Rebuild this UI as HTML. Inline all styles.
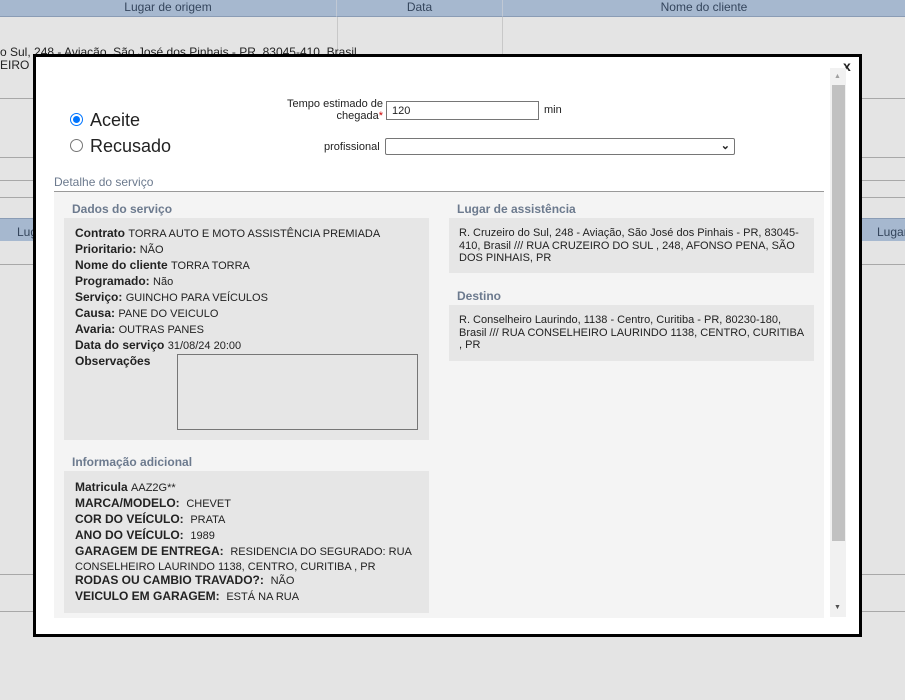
<!DOCTYPE html>
<html><head><meta charset="utf-8"><style>
*{margin:0;padding:0;box-sizing:border-box}
body{width:905px;height:700px;background:#e4e4e4;font-family:"Liberation Sans",Arial,sans-serif;color:#222;position:relative;overflow:hidden}
.a{position:absolute}
.hl{position:absolute;left:0;width:905px;height:1px;background:#a8a8a8}
.th{position:absolute;top:0;height:17px;background:#a6b8cf;border-bottom:1px solid #8a9cb5;font-size:12px;color:#34455c;text-align:center;line-height:15px}
.h{font-size:12px;font-weight:bold;color:#6c7a8e}
.box{background:#e6e6e6}
.l{font-size:12px;white-space:nowrap}
.l div{height:16px;line-height:16px}
.l b{font-weight:bold}
.l span{font-size:11px;line-height:16px}
.addr{font-size:11px;line-height:12.5px;padding:9px 0 0 10px;white-space:nowrap}
</style></head><body>
<div class="th" style="left:0;width:337px;border-right:1px solid #c0c8d4">Lugar de origem</div>
<div class="th" style="left:337px;width:166px;border-right:1px solid #c0c8d4">Data</div>
<div class="th" style="left:503px;width:402px">Nome do cliente</div>
<div class="a" style="left:337px;top:17px;width:1px;height:81px;background:#c8c8c8"></div>
<div class="a" style="left:502px;top:17px;width:1px;height:81px;background:#c8c8c8"></div>
<div class="a" style="left:0;top:46px;font-size:12px;line-height:13px;white-space:nowrap">o Sul, 248 - Aviação, São José dos Pinhais - PR, 83045-410, Brasil<br>EIRO D</div>
<div class="hl" style="top:98px"></div>
<div class="hl" style="top:157px"></div>
<div class="hl" style="top:180px"></div>
<div class="hl" style="top:197px"></div>
<div class="a" style="left:0;top:218px;width:905px;height:23px;background:#a6b8cf;border-top:1px solid #8a9cb5"></div>
<div class="a" style="left:17px;top:225px;font-size:12px;color:#34455c">Lugar</div>
<div class="a" style="left:877px;top:225px;font-size:12px;color:#34455c">Lugar</div>
<div class="hl" style="top:264px"></div>
<div class="hl" style="top:574px"></div>
<div class="hl" style="top:611px"></div>

<div class="a" style="left:33px;top:54px;width:829px;height:583px;background:#fff;border:3px solid #000"></div>
<div class="a" style="left:843px;top:58px;font-size:14px;font-weight:bold">x</div>
<div class="a" style="left:830px;top:68px;width:16px;height:549px;background:#f1f1f1"></div>
<div class="a" style="left:832px;top:85px;width:13px;height:456px;background:#c1c1c1"></div>
<div class="a" style="left:834px;top:73px;font-size:7px;color:#a0a0a0">▲</div>
<div class="a" style="left:834px;top:604px;font-size:7px;color:#505050">▼</div>

<div class="a" style="left:70px;top:113px;width:13px;height:13px;border-radius:50%;border:1px solid #0075ff;background:#fff"><div style="margin:2px;width:7px;height:7px;border-radius:50%;background:#0075ff"></div></div>
<div class="a" style="left:90px;top:110px;font-size:18px">Aceite</div>
<div class="a" style="left:70px;top:139px;width:13px;height:13px;border-radius:50%;border:1px solid #767676;background:#fff"></div>
<div class="a" style="left:90px;top:136px;font-size:18px">Recusado</div>
<div class="a" style="left:260px;top:98px;width:123px;text-align:right;font-size:11px;line-height:12px">Tempo estimado de chegada<span style="color:#c00">*</span></div>
<div class="a" style="left:386px;top:101px;width:153px;height:19px;border:1px solid #767676;font-size:11px;padding:3px 5px">120</div>
<div class="a" style="left:544px;top:104px;font-size:11px">min</div>
<div class="a" style="left:324px;top:141px;font-size:11px">profissional</div>
<div class="a" style="left:385px;top:138px;width:350px;height:17px;border:1px solid #767676;border-radius:2px"><span style="position:absolute;right:4px;top:0;font-size:11px;font-weight:bold">⌄</span></div>

<div class="a h" style="left:54px;top:175px;font-weight:normal;font-size:12px">Detalhe do serviço</div>
<div class="a" style="left:54px;top:191px;width:770px;height:1px;background:#999"></div>
<div class="a" style="left:54px;top:192px;width:770px;height:426px;background:#f4f4f4"></div>

<div class="a h" style="left:72px;top:202px">Dados do serviço</div>
<div class="a box" style="left:64px;top:218px;width:365px;height:222px"></div>
<div class="a l" style="left:75px;top:225px">
<div><b>Contrato</b> <span>TORRA AUTO E MOTO ASSISTÊNCIA PREMIADA</span></div>
<div><b>Prioritario:</b> <span>NÃO</span></div>
<div><b>Nome do cliente</b> <span>TORRA TORRA</span></div>
<div><b>Programado:</b> <span>Não</span></div>
<div><b>Serviço:</b> <span>GUINCHO PARA VEÍCULOS</span></div>
<div><b>Causa:</b> <span>PANE DO VEICULO</span></div>
<div><b>Avaria:</b> <span>OUTRAS PANES</span></div>
<div><b>Data do serviço</b> <span>31/08/24 20:00</span></div>
<div><b>Observações</b></div></div>
<div class="a" style="left:177px;top:354px;width:241px;height:76px;border:1px solid #767676"></div>

<div class="a h" style="left:72px;top:455px">Informação adicional</div>
<div class="a box" style="left:64px;top:471px;width:365px;height:142px"></div>
<div class="a l" style="left:75px;top:479px">
<div><b>Matricula</b> <span>AAZ2G**</span></div>
<div><b>MARCA/MODELO:</b>&nbsp; <span>CHEVET</span></div>
<div><b>COR DO VEÍCULO:</b>&nbsp; <span>PRATA</span></div>
<div><b>ANO DO VEÍCULO:</b>&nbsp; <span>1989</span></div>
<div><b>GARAGEM DE ENTREGA:</b>&nbsp; <span>RESIDENCIA DO SEGURADO: RUA</span></div>
<div style="height:13px;line-height:13px"><span>CONSELHEIRO LAURINDO 1138, CENTRO, CURITIBA , PR</span></div>
<div><b>RODAS OU CAMBIO TRAVADO?:</b>&nbsp; <span>NÃO</span></div>
<div><b>VEICULO EM GARAGEM:</b>&nbsp; <span>ESTÁ NA RUA</span></div></div>

<div class="a h" style="left:457px;top:202px">Lugar de assistência</div>
<div class="a box addr" style="left:449px;top:218px;width:365px;height:55px">R. Cruzeiro do Sul, 248 - Aviação, São José dos Pinhais - PR, 83045-<br>410, Brasil /// RUA CRUZEIRO DO SUL , 248, AFONSO PENA, SÃO<br>DOS PINHAIS, PR</div>
<div class="a h" style="left:457px;top:289px">Destino</div>
<div class="a box addr" style="left:449px;top:305px;width:365px;height:56px">R. Conselheiro Laurindo, 1138 - Centro, Curitiba - PR, 80230-180,<br>Brasil /// RUA CONSELHEIRO LAURINDO 1138, CENTRO, CURITIBA<br>, PR</div>
</body></html>
